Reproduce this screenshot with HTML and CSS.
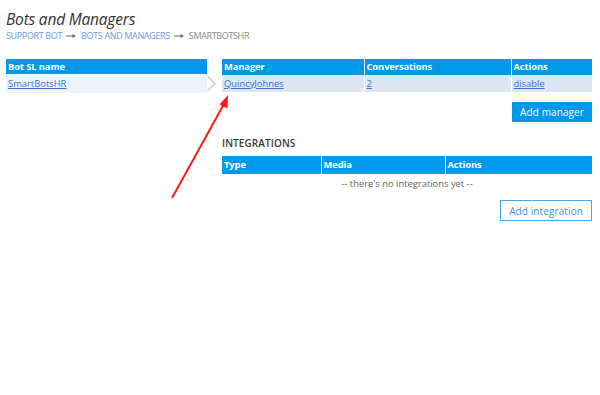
FILE: index.html
```html
<!DOCTYPE html>
<html>
<head>
<meta charset="utf-8">
<link rel="stylesheet" href="styles.css">
</head>
<body>
<div class="page">
  <h1 class="title">Bots and Managers</h1>
  <div class="crumbs">
    <a class="crumb" href="#">Support bot</a>
    <svg class="sep" width="10" height="6" viewBox="0 0 10 6"><line x1="0" y1="3" x2="7" y2="3" stroke="#666" stroke-width="1"/><polygon points="6.5,1 10,3 6.5,5" fill="#666"/></svg>
    <a class="crumb" href="#">Bots and managers</a>
    <svg class="sep" width="10" height="6" viewBox="0 0 10 6"><line x1="0" y1="3" x2="7" y2="3" stroke="#666" stroke-width="1"/><polygon points="6.5,1 10,3 6.5,5" fill="#666"/></svg>
    <span class="crumb current">SmartBotsHR</span>
  </div>
  <div class="columns">
    <div class="left">
      <table class="grid bots">
        <thead><tr><th>Bot SL name</th></tr></thead>
        <tbody><tr><td class="sel"><a href="#">SmartBotsHR</a><span class="chev"></span></td></tr></tbody>
      </table>
    </div>
    <div class="right">
      <table class="grid managers">
        <colgroup><col style="width:142px"><col style="width:147px"><col></colgroup>
        <thead><tr><th>Manager</th><th>Conversations</th><th>Actions</th></tr></thead>
        <tbody><tr><td><a href="#">QuincyJohnes</a></td><td><a href="#">2</a></td><td><a href="#">disable</a></td></tr></tbody>
      </table>
      <div class="btnrow"><button class="btn solid">Add manager</button></div>
      <h2 class="section">INTEGRATIONS</h2>
      <table class="grid integrations">
        <colgroup><col style="width:99px"><col style="width:124px"><col></colgroup>
        <thead><tr><th>Type</th><th>Media</th><th>Actions</th></tr></thead>
        <tbody><tr><td colspan="3" class="empty">-- there's no integrations yet --</td></tr></tbody>
      </table>
      <div class="btnrow2"><button class="btn outline">Add integration</button></div>
    </div>
  </div>
  <svg class="annot" width="600" height="395" viewBox="0 0 600 395">
    <line x1="172" y1="198" x2="224" y2="104" stroke="#ff1a1a" stroke-width="2"/>
    <polygon points="228,95 219.5,104.5 227.5,108.5" fill="#ff1a1a"/>
  </svg>
</div>
</body>
</html>
```
FILE: styles.css
```css
* { box-sizing: border-box; }
html, body { margin: 0; padding: 0; background: #fff; }
body { font-family: "Open Sans", "Noto Sans", sans-serif; color: #333; }
.page { position: relative; width: 600px; height: 395px; padding: 8px 8px 0 6px; }
.title { margin: 0; font-size: 15.5px; font-weight: 400; font-style: italic; line-height: 22px; color: #333; letter-spacing: -0.2px; }
.crumbs { display: flex; align-items: center; font-size: 9px; letter-spacing: -0.35px; text-transform: uppercase; line-height: 12px; }
.crumb { color: #6b9bea; text-decoration: none; }
.crumb.current { color: #8a8a8a; }
.sep { margin: 0 5px 0 4px; display: block; }
.columns { display: flex; gap: 15px; margin-top: 17px; align-items: flex-start; }
.left { width: 201px; }
.right { flex: 1; }
.grid { width: 100%; border-collapse: collapse; table-layout: fixed; font-size: 9.4px; }
.grid th { background: #0299e8; color: #fff; text-align: left; font-weight: 700; padding: 0 2px; height: 16px; line-height: 14px; border-right: 1px solid #e6f2fb; letter-spacing: -0.1px; }
.grid th:last-child { border-right: none; }
.grid td { padding: 0 2px; height: 17px; line-height: 17px; border-right: 1px solid #fff; }
.grid td:last-child { border-right: none; }
.grid a { color: #3a6fd8; }
.bots th { height: 15px; }
.bots td.sel { background: #eef4fb; position: relative; height: 19px; padding-left: 2px; }
.chev { position: absolute; right: -12px; top: 2px; width: 12px; height: 15px; }
.chev::before { content: ""; position: absolute; left: -4px; top: 2px; width: 9px; height: 9px; border-top: 2px solid #d4d8dc; border-right: 2px solid #d4d8dc; transform: rotate(45deg); }
.managers tbody td { background: #dde7f1; }
.btnrow { display: flex; justify-content: flex-end; margin-top: 10px; }
.btn { font-family: inherit; font-size: 10px; letter-spacing: 0.1px; cursor: pointer; }
.btn.solid { background: #0299e8; color: #fff; border: none; height: 20px; padding: 0 8px; }
.btn.outline { background: #fff; color: #3d8fdf; border: 1px solid #46a6ec; height: 21px; padding: 0 8px; }
.section { margin: 14px 0 0; font-size: 10px; font-weight: 600; letter-spacing: 0.1px; line-height: 14px; color: #3a3a3a; }
.integrations { margin-top: 6px; }
.integrations th { height: 18px; }
.integrations td.empty { text-align: center; color: #666; height: 19px; }
.btnrow2 { display: flex; justify-content: flex-end; margin-top: 7px; }
.annot { position: absolute; left: 0; top: 0; pointer-events: none; }
```
